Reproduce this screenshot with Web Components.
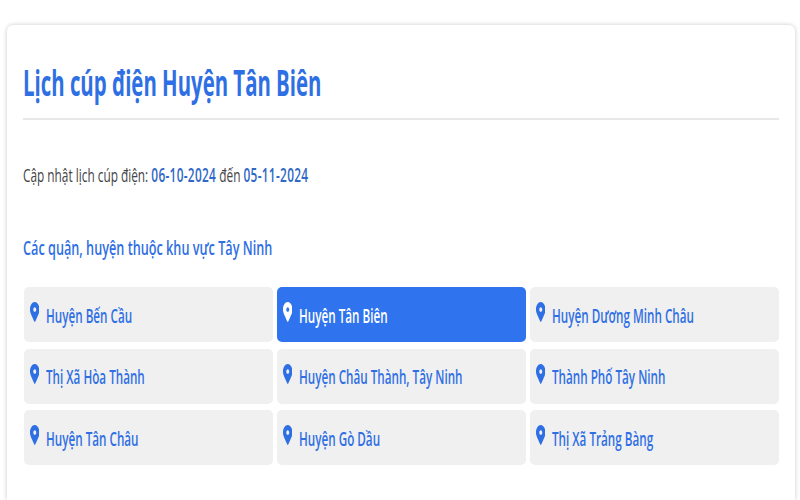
<!DOCTYPE html>
<html lang="vi">
<head>
<meta charset="utf-8">
<title>Lịch cúp điện</title>
<style>
    html, body { margin: 0; padding: 0; background: #fff; height: 500px; overflow: hidden; }
    body { font-family: "Open Sans", "Noto Sans", sans-serif; }
</style>
</head>
<body>
<outage-page></outage-page>

<template id="squeeze-tpl">
    <style>
        :host { display: inline-block; transform: scaleX(var(--sq, .63)); transform-origin: left center; white-space: nowrap; }
    </style>
    <slot></slot>
</template>

<script>
class SqueezeText extends HTMLElement {
    constructor() {
        super();
        this.shadowDOM = this.attachShadow({ mode: "open" });
        this.shadowDOM.appendChild(document.getElementById("squeeze-tpl").content.cloneNode(true));
    }
}
customElements.define("squeeze-text", SqueezeText);

class AreaItem extends HTMLElement {
    constructor() {
        super();
        this.shadowDOM = this.attachShadow({ mode: "open" });
    }

    connectedCallback() {
        this.render();
    }

    render() {
        this.shadowDOM.innerHTML = `
            <style>
                :host {
                    display: flex;
                    align-items: center;
                    gap: 7px;
                    box-sizing: border-box;
                    height: 55px;
                    padding: 0 0 0 6px;
                    border-radius: 5px;
                    background: #f0f0f1;
                    color: #2f6fe4;
                    font-size: 19px;
                    font-weight: 600;
                    overflow: hidden;
                }
                :host([active]) {
                    background: #2f74ee;
                    color: #fff;
                }
                svg {
                    flex: none;
                    width: 9.5px;
                    height: 20px;
                    fill: currentColor;
                    margin-top: -5px;
                }
                squeeze-text { --sq: .615; margin-top: 2px; }
            </style>
            <svg viewBox="0 0 384 512" preserveAspectRatio="none"><path fill-rule="evenodd" d="M172.268 501.67C26.97 291.031 0 262.413 0 192 0 85.961 85.961 0 192 0s192 85.961 192 192c0 70.413-26.97 99.031-172.268 309.67-9.535 13.774-29.93 13.773-39.464 0zM192 252c33 0 60-27 60-60s-27-60-60-60-60 27-60 60 27 60 60 60z"/></svg>
            <squeeze-text><slot></slot></squeeze-text>`;
    }
}
customElements.define("area-item", AreaItem);

class OutagePage extends HTMLElement {
    constructor() {
        super();
        this.shadowDOM = this.attachShadow({ mode: "open" });
    }

    connectedCallback() {
        const areas = [
            "Huyện Bến Cầu", "Huyện Tân Biên", "Huyện Dương Minh Châu",
            "Thị Xã Hòa Thành", "Huyện Châu Thành, Tây Ninh", "Thành Phố Tây Ninh",
            "Huyện Tân Châu", "Huyện Gò Dầu", "Thị Xã Trảng Bàng"
        ];
        this.shadowDOM.innerHTML = `
            <style>
                :host {
                    display: block;
                    padding: 25px 5px 0 7px;
                }
                .card {
                    box-sizing: border-box;
                    height: 475px;
                    padding: 0 16px;
                    border-radius: 6px 6px 0 0;
                    background: #fff;
                    box-shadow: 0 0 4px rgba(0, 0, 0, .22);
                }
                h1 {
                    margin: 0;
                    height: 95px;
                    display: flex;
                    align-items: center;
                    box-sizing: border-box;
                    padding-top: 21px;
                    font-size: 35px;
                    font-weight: 700;
                    color: #2f6fe4;
                    border-bottom: 2px solid #e8e8ea;
                }
                h1 squeeze-text { --sq: .582; }
                .dates {
                    margin-top: 42px;
                    font-size: 19px;
                    line-height: 26px;
                    color: #444;
                }
                .dates squeeze-text { --sq: .623; }
                .dates b { font-weight: 600; color: #2f68c8; letter-spacing: .5px; }
                h2 {
                    margin: 46px 0 0;
                    font-size: 20px;
                    line-height: 28px;
                    font-weight: 600;
                    color: #2f6fe4;
                }
                h2 squeeze-text { --sq: .634; }
                .grid {
                    display: grid;
                    grid-template-columns: repeat(3, 1fr);
                    gap: 6.5px 3.5px;
                    margin: 25px 0 0 .5px;
                }
            </style>
            <div class="card">
                <h1><squeeze-text>Lịch cúp điện Huyện Tân Biên</squeeze-text></h1>
                <div class="dates"><squeeze-text>Cập nhật lịch cúp điện: <b>06-10-2024</b> đến <b>05-11-2024</b></squeeze-text></div>
                <h2><squeeze-text>Các quận, huyện thuộc khu vực Tây Ninh</squeeze-text></h2>
                <div class="grid">
                    ${areas.map((a) => `<area-item${a === "Huyện Tân Biên" ? " active" : ""}>${a}</area-item>`).join("")}
                </div>
            </div>`;
    }
}
customElements.define("outage-page", OutagePage);
</script>
</body>
</html>
